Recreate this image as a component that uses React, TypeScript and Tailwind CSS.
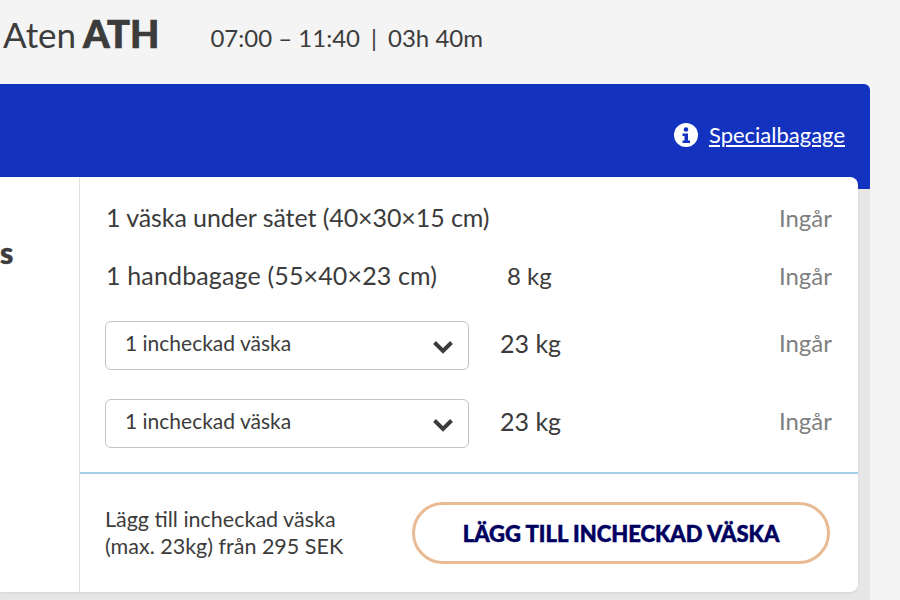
const font = "font-['Lato',sans-serif]";

const Ingar = ({ raised }: { raised?: boolean }) => (
  <span className={`ml-auto pr-[26px] text-[24px] leading-[30px] text-[#808080] ${raised ? "mt-[-5px]" : ""}`}>Ingår</span>
);

const BagSelect = () => (
  <div className="flex h-[49px] w-[364px] items-center justify-between rounded-[6px] border border-[#c4c4bc] bg-white pl-[19px] pr-[13px] text-[21px] text-[#3c3c3c]">
    <span className="mt-[-5px]">1 incheckad väska</span>
    <svg width="24" height="16" viewBox="0 0 24 16" className="mt-[3px]">
      <path d="M3.500 3.500 12 12l8.500-8.500" fill="none" stroke="#3c3c3c" strokeWidth="4" />
    </svg>
  </div>
);

const SelectRow = () => (
  <div className="flex items-center pl-[25px]">
    <BagSelect />
    <span className="ml-[31px] mt-[-3px] text-[25px] text-[#3c3c3c]">23 kg</span>
    <Ingar raised />
  </div>
);

export default function App() {
  return (
    <div className={`${font} h-[600px] w-[900px] overflow-hidden bg-[#f4f4f4] text-[#3c3c3c]`}>
      <div className="flex h-[84px] items-start pl-[3px] pt-[9px]">
        <span className="text-[35px] leading-[48px]">
          Aten <b className="ml-[-2px] text-[38px] font-black [-webkit-text-stroke:0.7px_#3c3c3c]">ATH</b>
        </span>
        <span className="ml-[51px] mt-[8px] flex items-center text-[24px] leading-[42px]">
          07:00 – 11:40
          <span className="mx-[11px]">|</span>
          03h 40m
        </span>
      </div>

      <div className="h-[600px] w-[870px] rounded-tr-[6px] bg-[#e6e6e6]">
        <div className="flex h-[105px] items-start justify-end rounded-tr-[6px] bg-[#1232bf] pr-[25px] pt-[36px] text-white">
          <div className="flex items-center gap-[11px]">
            <svg width="24" height="24" viewBox="0 0 24 24">
              <circle cx="12" cy="12" r="12" fill="white" />
              <circle cx="12" cy="6.500" r="2.300" fill="#1232bf" />
              <path d="M8.500 10.500h5.500v7h2v2.500H8.500v-2.500h2v-4.500h-2z" fill="#1232bf" />
            </svg>
            <a className="text-[22px] leading-[30px] underline underline-offset-2">Specialbagage</a>
          </div>
        </div>

        <div className="relative mt-[-12px] flex h-[415px] w-[858px] rounded-br-[8px] rounded-tr-[8px] bg-white shadow-[0_1px_3px_rgba(0,0,0,0.08)]">
          <div className="w-[79px] shrink-0 pt-[55px] text-right">
            <span className="mr-[69px] text-[30px] font-black leading-[40px] [-webkit-text-stroke:0.5px_#3c3c3c]">s</span>
          </div>
          <div className="flex flex-1 flex-col border-l border-l-[#e0e0e0]">
            <div className="flex h-[295px] flex-col pt-[26px]">
              <div className="flex h-[30px] items-center pl-[26px]">
                <span className="text-[25px] tracking-[-0.08px]">1 väska under sätet (40×30×15 cm)</span>
                <Ingar />
              </div>
              <div className="mt-[28px] flex h-[30px] items-center pl-[26px]">
                <span className="w-[401px] text-[25px] tracking-[0.15px]">1 handbagage (55×40×23 cm)</span>
                <span className="text-[24px]">8 kg</span>
                <Ingar />
              </div>
              <div className="mt-[30px] flex flex-col gap-[29px]">
                <SelectRow />
                <SelectRow />
              </div>
            </div>
            <div className="h-[2px] bg-[#a5d0ea]" />
            <div className="flex flex-1 items-center justify-between pl-[25px] pr-[28px]">
              <p className="text-[21.500px] leading-[27px]">
                Lägg till incheckad väska
                <br />
                (max. 23kg) från 295 SEK
              </p>
              <button className="flex h-[62px] w-[418px] items-center justify-center rounded-full border-[3px] border-[#e9bb94] bg-white text-[22px] font-black text-[#00005f] [-webkit-text-stroke:0.5px_#00005f]">
                LÄGG TILL INCHECKAD VÄSKA
              </button>
            </div>
          </div>
        </div>
      </div>
    </div>
  );
}
